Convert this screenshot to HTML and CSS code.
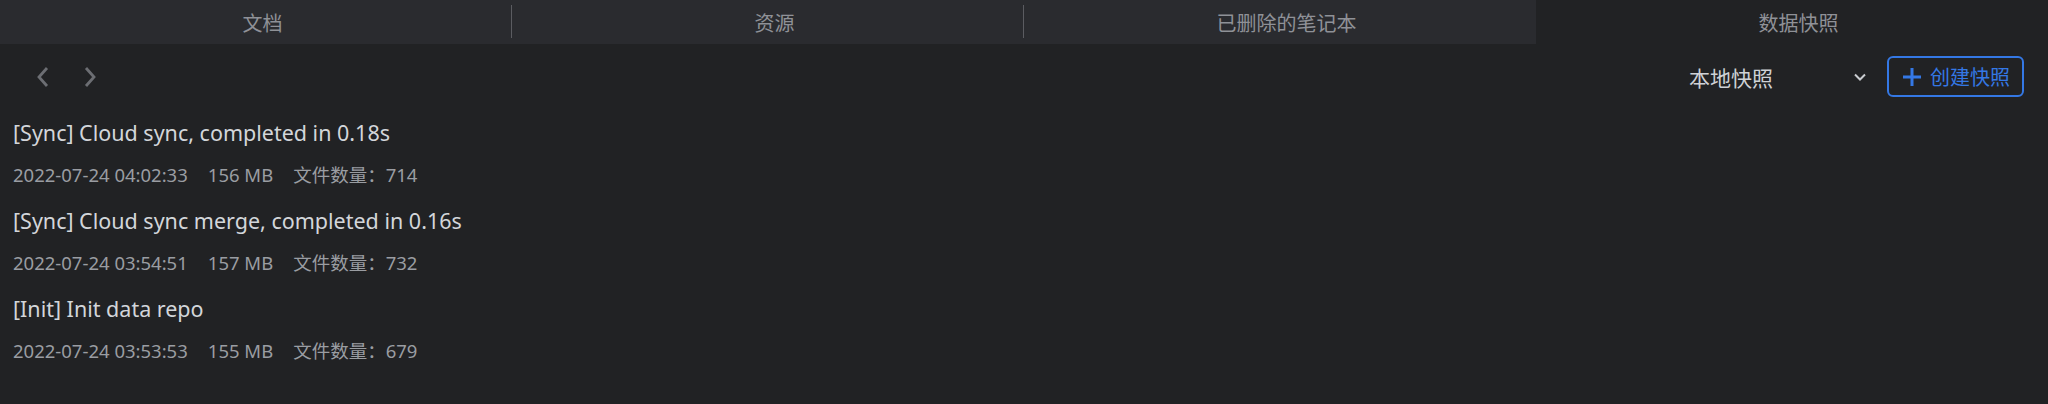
FILE: index.html
```html
<!DOCTYPE html>
<html lang="zh-CN">
<head>
    <meta charset="UTF-8">
    <title>数据快照</title>
    <link rel="stylesheet" href="styles.css">
</head>
<body>
    <div class="tabs">
        <div class="tab divided">文档</div>
        <div class="tab divided">资源</div>
        <div class="tab">已删除的笔记本</div>
        <div class="tab active">数据快照</div>
    </div>

    <div class="toolbar">
        <div class="pager">
            <button class="nav-btn" title="上一页">
                <svg viewBox="0 0 14 22" width="14" height="22"><path d="M11 2 L3 11 L11 20" /></svg>
            </button>
            <button class="nav-btn" title="下一页">
                <svg viewBox="0 0 14 22" width="14" height="22"><path d="M3 2 L11 11 L3 20" /></svg>
            </button>
        </div>
        <div class="spacer"></div>
        <div class="select">
            <span>本地快照</span>
            <svg viewBox="0 0 12 8" width="12" height="8"><path d="M1 1.5 L6 6.5 L11 1.5" /></svg>
        </div>
        <button class="create-btn">
            <svg viewBox="0 0 18 18" width="18" height="18"><path d="M9 0 V18 M0 9 H18" /></svg>
            <span>创建快照</span>
        </button>
    </div>

    <div class="list">
        <div class="item">
            <div class="item-title">[Sync] Cloud sync, completed in 0.18s</div>
            <div class="item-meta">
                <span>2022-07-24 04:02:33</span>
                <span>156 MB</span>
                <span>文件数量：714</span>
            </div>
        </div>
        <div class="item">
            <div class="item-title">[Sync] Cloud sync merge, completed in 0.16s</div>
            <div class="item-meta">
                <span>2022-07-24 03:54:51</span>
                <span>157 MB</span>
                <span>文件数量：732</span>
            </div>
        </div>
        <div class="item">
            <div class="item-title">[Init] Init data repo</div>
            <div class="item-meta">
                <span>2022-07-24 03:53:53</span>
                <span>155 MB</span>
                <span>文件数量：679</span>
            </div>
        </div>
    </div>
</body>
</html>
```

FILE: styles.css
```css
:root {
    --bg: #212224;
    --tab-bg: #2a2b2f;
    --text: #d3d6da;
    --muted: #9a9da2;
    --blue: #3478e5;
}

* {
    margin: 0;
    padding: 0;
    box-sizing: border-box;
}

body {
    background: var(--bg);
    font-family: "Noto Sans", "Noto Sans CJK SC", sans-serif;
    color: var(--text);
    height: 404px;
    overflow: hidden;
}

.tabs {
    display: grid;
    grid-template-columns: repeat(4, 1fr);
    height: 44px;
}

.tab {
    display: flex;
    align-items: center;
    justify-content: center;
    padding-left: 13px;
    background: var(--tab-bg);
    color: #8f9197;
    font-size: 20px;
    position: relative;
}

.tab.divided::after {
    content: "";
    position: absolute;
    right: 0;
    top: 5px;
    bottom: 6px;
    width: 1px;
    background: #5b5c61;
}

.tab.active {
    background: var(--bg);
}

.toolbar {
    display: flex;
    align-items: center;
    height: 66px;
    padding: 12px 24px 13px 29px;
}

.pager {
    display: flex;
    gap: 19px;
}

.nav-btn {
    background: none;
    border: none;
    width: 28px;
    height: 28px;
    display: flex;
    align-items: center;
    justify-content: center;
}

.nav-btn path {
    fill: none;
    stroke: #6c6e73;
    stroke-width: 2.8;
}

.spacer {
    flex: 1;
}

.select {
    display: flex;
    align-items: center;
    justify-content: space-between;
    width: 200px;
    padding: 0 9px 0 14px;
    font-size: 21px;
    color: #cfd2d6;
    margin-right: 12px;
}

.select path {
    fill: none;
    stroke: #c9ccd0;
    stroke-width: 2;
}

.create-btn {
    display: flex;
    align-items: center;
    gap: 9px;
    height: 41px;
    padding: 0 12px 0 14px;
    background: transparent;
    border: 2px solid var(--blue);
    border-radius: 6px;
    color: var(--blue);
    font-family: inherit;
    font-size: 20px;
}

.create-btn path {
    fill: none;
    stroke: var(--blue);
    stroke-width: 3;
}

.item {
    padding: 8px 13px 10px;
    height: 88px;
}

.item-title {
    font-size: 21.5px;
    line-height: 30px;
    color: var(--text);
}

.item-meta {
    display: flex;
    gap: 20px;
    margin-top: 14px;
    font-size: 18.5px;
    line-height: 26px;
    color: var(--muted);
}
```
